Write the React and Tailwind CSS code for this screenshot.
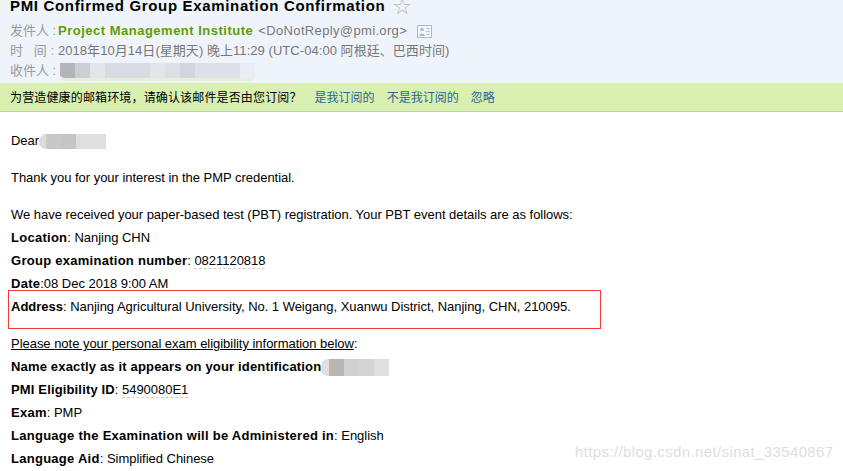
const sans = "font-['Liberation_Sans','Noto_Sans_CJK_SC',sans-serif]";

// mosaic blur that hides private names
const Blur = ({ cells, className }) => (
  <span className={"inline-flex overflow-hidden align-middle " + className}>
    {cells.map((c, i) => (
      <span key={i} className="h-full" style={{ width: c[0], background: c[1] }} />
    ))}
  </span>
);

const HeaderRow = ({ label, children }) => (
  <div className="flex h-[20px] items-center text-[13px] text-[#999]">
    <span className="w-[48px] shrink-0 whitespace-pre">{label}</span>
    {children}
  </div>
);

const Line = ({ children }) => <div className="h-[23px] leading-[23px]">{children}</div>;

const Bold = ({ children, className = "tracking-[0.27px]" }) => <b className={className}>{children}</b>;

const Dotted = ({ children }) => (
  <span className="border-b border-dashed border-[#ccc]">{children}</span>
);

export default function App() {
  return (
    <div className={"relative h-[471px] w-[843px] overflow-hidden bg-white " + sans}>
      {/* mail header */}
      <div className="h-[83px] bg-[#eff4fb] pl-[10px]">
        <div className="flex h-[13px] items-center">
          <h1 className="whitespace-nowrap text-[15px] font-bold tracking-[0.67px] text-black">
            PMI Confirmed Group Examination Confirmation
          </h1>
          <span className="ml-[8px] text-[18px] leading-none text-[#bbb]">☆</span>
        </div>
        <div className="mt-[8px]">
          <HeaderRow label="发件人 :">
            <span className="font-bold tracking-[0.5px] text-[#5f9e00]">Project Management Institute</span>
            <span className="ml-[5px] tracking-[0.35px] text-[#777]">&lt;DoNotReply@pmi.org&gt;</span>
            <svg width="15" height="13" viewBox="0 0 15 13" className="ml-[10px]">
              <rect x="0.5" y="0.5" width="14" height="12" fill="#f4f8fd" stroke="#a9bcd4" />
              <circle cx="5" cy="4.5" r="1.8" fill="#a9bcd4" />
              <path d="M2 11c0-3.5 6-3.5 6 0z" fill="#a9bcd4" />
              <path d="M9.5 3.5h3M9.5 6.5h3M9.5 9.5h3" stroke="#a9bcd4" />
            </svg>
          </HeaderRow>
          <HeaderRow label="时   间 :">
            <span className="whitespace-nowrap tracking-[0.05px] text-[#777]">2018年10月14日(星期天) 晚上11:29 (UTC-04:00 阿根廷、巴西时间)</span>
          </HeaderRow>
          <HeaderRow label="收件人 :">
            <Blur
              className="ml-[2px] mt-[1px] h-[18px] rounded-b-[6px] border-b-[3px] border-[#e4f0d8]"
              cells={[[15, "#b4b5b9"], [15, "#cbced4"], [15, "#e2e5ea"], [45, "#d8dce2"], [15, "#e2e5ea"], [15, "#dcdfe5"], [15, "#d2d5dc"], [45, "#dde0e6"], [15, "#e9edf4"]]}
            />
          </HeaderRow>
        </div>
      </div>

      {/* subscribe confirmation bar */}
      <div className="flex h-[29px] items-center border-b border-[#b5cde8] bg-[#d9f0b0] pl-[10px] pt-[2px] text-[12px]">
        <span className="tracking-[0.15px] text-black">为营造健康的邮箱环境，请确认该邮件是否由您订阅？</span>
        <a className="ml-[13px] text-[#2a6496]">是我订阅的</a>
        <a className="ml-[12px] text-[#2a6496]">不是我订阅的</a>
        <a className="ml-[12px] text-[#2a6496]">忽略</a>
      </div>

      {/* mail body */}
      <div className="pl-[11px] pt-[17px] text-[13px] tracking-[-0.03px] text-black">
        <Line>
          Dear
          <Blur className="-mt-[1px] h-[15px] rounded-l-[7px]" cells={[[7, "#dcdcdc"], [15, "#c8c8c8"], [15, "#c4c6c4"], [30, "#dedede"]]} />
        </Line>
        <div className="mt-[14px]">
          <Line>Thank you for your interest in the PMP credential.</Line>
        </div>
        <div className="mt-[14px]">
          <Line>We have received your paper-based test (PBT) registration. Your PBT event details are as follows:</Line>
          <Line><Bold>Location</Bold>: Nanjing CHN</Line>
          <Line><Bold>Group examination number</Bold>: <Dotted>0821120818</Dotted></Line>
          <Line><Bold>Date</Bold>:08 Dec 2018 9:00 AM</Line>
          <Line><Bold className="tracking-[0px]">Address</Bold>: Nanjing Agricultural University, No. 1 Weigang, Xuanwu District, Nanjing, CHN, 210095.</Line>
        </div>
        <div className="mt-[14px]">
          <Line><u>Please note your personal exam eligibility information below</u>:</Line>
          <Line>
            <Bold className="tracking-[0.17px]">Name exactly as it appears on your identification</Bold>
            <Blur className="mt-[-1px] h-[17px] rounded-l-[7px]" cells={[[8, "#e0e0e0"], [15, "#b9b6b3"], [15, "#cfd2d2"], [15, "#d4d4d4"], [15, "#dfdfdf"]]} />
          </Line>
          <Line><Bold className="tracking-[0.15px]">PMI Eligibility ID</Bold>: <Dotted>5490080E1</Dotted></Line>
          <Line><Bold>Exam</Bold>: PMP</Line>
          <Line><Bold>Language the Examination will be Administered in</Bold>: English</Line>
          <Line><Bold>Language Aid</Bold>: Simplified Chinese</Line>
        </div>
      </div>

      {/* red highlight drawn over the mail */}
      <div className="absolute left-[8px] top-[290px] h-[39px] w-[593px] border border-[#f03a3a]" />
      {/* csdn watermark */}
      <div className="absolute left-[575px] top-[441px] text-[15px] tracking-[0.37px] text-[#dedede]">
        https://blog.csdn.net/sinat_33540867
      </div>
    </div>
  );
}
